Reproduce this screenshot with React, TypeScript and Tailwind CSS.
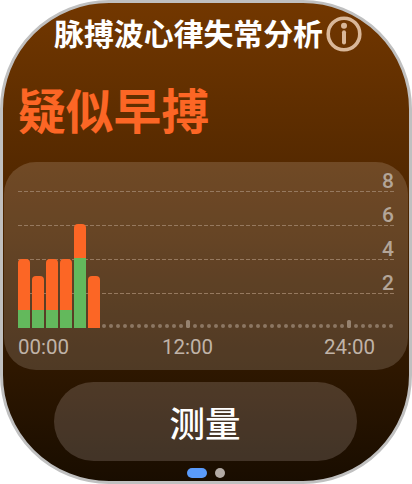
const bars = [
  { total: 69, normal: 18 },
  { total: 52, normal: 18 },
  { total: 69, normal: 18 },
  { total: 69, normal: 18 },
  { total: 104, normal: 70 },
  { total: 52, normal: 0 },
]

const gridLabels = [8, 6, 4, 2]

// empty slots after the last bar, taller marks at 12:00 and 24:00
const slots = Array.from({ length: 42 }, (_, i) => i === 12 || i === 35)

function InfoIcon() {
  return (
    <svg className="h-9 w-9 shrink-0" viewBox="0 0 36 36" fill="none">
      <circle cx="18" cy="18" r="15.8" stroke="#d9b798" strokeWidth="3.6" />
      <circle cx="18" cy="9.8" r="3" fill="#d9b798" />
      <path d="M18 16.3v10.2" stroke="#d9b798" strokeWidth="4" strokeLinecap="round" />
    </svg>
  )
}

function Chart() {
  return (
    <div className="mx-px mt-[18px] h-[208px] rounded-[32px] bg-[#fff0e8]/16 px-[14px] font-[Roboto,sans-serif] text-[20px]">
      <div className="relative h-[166px]">
        {/* Grid lines */}
        <div className="flex flex-col pt-[7px]">
          {gridLabels.map((label) => (
            <div key={label} className="h-[34px]">
              <div className="h-[22px] text-right text-[21px] leading-[24px] font-medium text-[#b3a598]">
                {label}
              </div>
              <div className="h-px w-[376px] bg-[repeating-linear-gradient(90deg,#96795f_0px,#96795f_4px,transparent_4px,transparent_6px)]" />
            </div>
          ))}
        </div>

        {/* Bars and empty slots */}
        <div className="absolute inset-x-0 bottom-0 flex items-end">
          <div className="flex items-end gap-0.5">
            {bars.map((bar, index) => (
              <div
                key={index}
                className="flex w-3 flex-col justify-end overflow-hidden rounded-t-[4px] bg-[#fc6625]"
                style={{ height: bar.total }}
              >
                <div className="bg-[#63b95c]" style={{ height: bar.normal }} />
              </div>
            ))}
          </div>
          <div className="ml-0.5 flex items-end gap-[3px]">
            {slots.map((tall, index) => (
              <div
                key={index}
                className={tall ? 'h-2 w-1 rounded-[1.5px] bg-[#96826f]' : 'h-1 w-1 rounded-full bg-[#8c7663]'}
              />
            ))}
          </div>
        </div>
      </div>

      <div className="flex pt-[7px] text-[20.5px] leading-[25px] text-[#c0b3a8]">
        <span className="w-[144px]">00:00</span>
        <span className="w-[162px]">12:00</span>
        <span>24:00</span>
      </div>
    </div>
  )
}

export default function App() {
  return (
    <div className="h-[484px] w-[412px] overflow-hidden bg-white font-['Noto_Sans_CJK_SC',sans-serif]">
      <div className="flex h-full w-full flex-col overflow-hidden rounded-[109px] border-[3px] border-[#c0c0c0] bg-linear-to-b from-[#723700] via-[#482300] to-[#190d00]">
        <div className="flex h-[62px] items-center pl-[51px]">
          <h1 className="w-[272px] pb-1 text-[29.9px] leading-[58px] font-bold whitespace-nowrap text-white">
            脉搏波心律失常分析
          </h1>
          <InfoIcon />
        </div>

        <h2 className="h-[79px] pl-[15px] text-[47.8px] leading-[87px] font-bold text-[#fc6625]">疑似早搏</h2>

        <Chart />

        <button className="mt-3 ml-[51px] h-[79px] w-[303px] shrink-0 rounded-full bg-[#fff0e8]/17 pr-px text-[35.5px] leading-[79px] font-medium text-white">
          测量
        </button>

        <div className="mt-[7px] flex justify-center gap-2">
          <span className="h-2.5 w-5 rounded-full bg-[#5a9bfb]" />
          <span className="h-2.5 w-2.5 rounded-full bg-[#b3aba5]" />
        </div>
      </div>
    </div>
  )
}
